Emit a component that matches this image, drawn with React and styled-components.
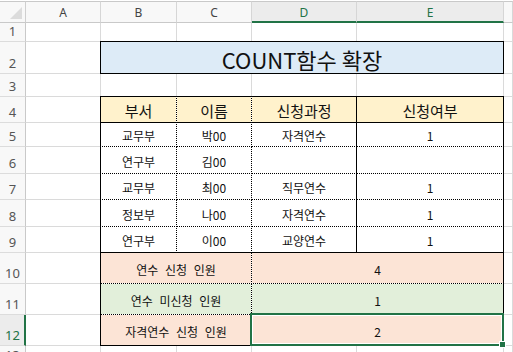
import React from 'react';
import styled, { createGlobalStyle } from 'styled-components';

const GlobalStyle = createGlobalStyle`
  html, body { margin: 0; padding: 0; background: #fff; overflow: hidden; }
  body { font-family: "Noto Sans CJK KR", "Noto Sans", sans-serif; }
`;

const GREEN = '#217346';

// line styles for table borders: s = solid, d = dotted, anything else = none
const line = v =>
  v === 's' ? '1px solid #000' : v === 'd' ? '1px dotted #000' : '1px solid transparent';

const Sheet = styled.div`
  display: grid;
  grid-template-columns: 26px 75px 76px 75px 105px 147px 1fr;
  grid-template-rows: 22px 19px 32px 23px 26px 24px 27px 26px 27px 26px 31px 31px 31px 20px;
  width: 100vw;
  padding-top: 1px;
`;

const Corner = styled.div`
  background: #f8f8f8;
  border-top: 1px solid #c9c9c9;
  border-right: 1px solid #cfcfcf;
  border-bottom: 1px solid #c9c9c9;
  display: flex;
  justify-content: flex-end;
  align-items: flex-end;
  padding: 0 3px 3px 0;
`;

const Triangle = styled.div`
  width: 12px;
  height: 12px;
  background: #dcdcdc;
  clip-path: polygon(100% 0, 100% 100%, 0 100%);
`;

const ColHead = styled.div`
  background: ${p => (p.$sel ? '#ececec' : '#f8f8f8')};
  border-top: 1px solid #c9c9c9;
  border-right: 1px solid #d6d6d6;
  border-bottom: ${p => (p.$sel ? `2px solid ${GREEN}` : '1px solid #c9c9c9')};
  color: ${p => (p.$sel ? GREEN : '#444')};
  font-family: "Noto Sans", "Open Sans", sans-serif;
  font-size: 12px;
  display: flex;
  align-items: center;
  justify-content: center;
  padding-top: ${p => (p.$sel ? '1px' : '0')};
`;

const RowHead = styled.div`
  background: ${p => (p.$sel ? '#ececec' : '#f8f8f8')};
  border-right: ${p => (p.$sel ? `2px solid ${GREEN}` : '1px solid #c9c9c9')};
  border-bottom: 1px solid #dcdcdc;
  color: ${p => (p.$sel ? GREEN : '#555')};
  font-family: "Noto Sans", "Open Sans", sans-serif;
  font-size: 13px;
  line-height: 1;
  display: flex;
  align-items: flex-end;
  justify-content: center;
  padding-bottom: 3px;
  padding-left: ${p => (p.$sel ? '1px' : '0')};
  box-sizing: border-box;
`;

const Cell = styled.div`
  border-right: 1px solid #dadada;
  border-bottom: 1px solid #dadada;
`;

const TCell = styled.div`
  grid-column: span ${p => p.$span || 1};
  margin: -1px 0 0 -1px;
  border-top: ${p => line(p.$t)};
  border-right: ${p => line(p.$r)};
  border-bottom: ${p => line(p.$b)};
  border-left: ${p => line(p.$l)};
  background: ${p => p.$bg || '#fff'};
  background-clip: padding-box;
  display: flex;
  align-items: center;
  justify-content: center;
  font-size: ${p => p.$size || 12}px;
  word-spacing: ${p => (p.$wide ? '4px' : '0')};
  color: #111;
  white-space: nowrap;
  position: relative;
  padding-top: 2px;
`;

const Selection = styled.div`
  position: absolute;
  top: -2px;
  left: -2px;
  right: -1px;
  bottom: -1px;
  border: 2px solid ${GREEN};
  box-shadow: inset 0 0 0 1px #fff;
  z-index: 2;
  pointer-events: none;
`;

const FillHandle = styled.div`
  position: absolute;
  right: -4px;
  bottom: -4px;
  width: 5px;
  height: 5px;
  background: ${GREEN};
  border: 1px solid #fff;
`;

const PEACH = '#fce4d6';
const MINT = '#e2efda';

const people = [
  ['교무부', '박00', '자격연수', '1'],
  ['연구부', '김00', '', ''],
  ['교무부', '최00', '직무연수', '1'],
  ['정보부', '나00', '자격연수', '1'],
  ['연구부', '이00', '교양연수', '1'],
];

const totals = [
  { label: '연수 신청 인원', value: '4', bg: PEACH },
  { label: '연수 미신청 인원', value: '1', bg: MINT },
  { label: '자격연수 신청 인원', value: '2', bg: PEACH, sel: true },
];

function Blank({ n }) {
  return Array.from({ length: n }, (_, i) => <Cell key={i} />);
}

export default function App() {
  return (
    <>
      <GlobalStyle />
      <Sheet>
        <Corner><Triangle /></Corner>
        {['A', 'B', 'C', 'D', 'E'].map(c => (
          <ColHead key={c} $sel={c === 'D' || c === 'E'}>{c}</ColHead>
        ))}
        {/* column F is cut by the window edge, its letter falls outside */}
        <ColHead />

        <RowHead>1</RowHead>
        <Blank n={6} />

        <RowHead>2</RowHead>
        <Cell />
        <TCell $span={4} $t="s" $r="s" $b="s" $l="s" $bg="#ddebf7" $size={22}>
          COUNT함수 확장
        </TCell>
        <Cell />

        <RowHead>3</RowHead>
        <Blank n={6} />

        <RowHead>4</RowHead>
        <Cell />
        <TCell $t="s" $l="s" $r="d" $b="s" $bg="#fff2cc" $size={15}>부서</TCell>
        <TCell $t="s" $r="d" $b="s" $bg="#fff2cc" $size={15}>이름</TCell>
        <TCell $t="s" $r="s" $b="s" $bg="#fff2cc" $size={15}>신청과정</TCell>
        <TCell $t="s" $r="s" $b="s" $bg="#fff2cc" $size={15}>신청여부</TCell>
        <Cell />

        {people.map((row, i) => {
          const last = i === people.length - 1;
          const b = last ? 's' : 'd';
          return (
            <React.Fragment key={i}>
              <RowHead>{i + 5}</RowHead>
              <Cell />
              <TCell $l="s" $r="d" $b={b}>{row[0]}</TCell>
              <TCell $r="d" $b={b}>{row[1]}</TCell>
              <TCell $r="s" $b={b}>{row[2]}</TCell>
              <TCell $r="s" $b={b}>{row[3]}</TCell>
              <Cell />
            </React.Fragment>
          );
        })}

        {totals.map((t, i) => {
          const b = i === totals.length - 1 ? 's' : 'd';
          return (
            <React.Fragment key={t.label}>
              <RowHead $sel={t.sel}>{i + 10}</RowHead>
              <Cell />
              <TCell $span={2} $l="s" $r="d" $b={b} $bg={t.bg} $wide>{t.label}</TCell>
              <TCell $span={2} $r="s" $b={b} $bg={t.bg}>
                {t.value}
                {t.sel && (
                  <Selection>
                    <FillHandle />
                  </Selection>
                )}
              </TCell>
              <Cell />
            </React.Fragment>
          );
        })}

        <RowHead>13</RowHead>
        <Blank n={6} />
      </Sheet>
    </>
  );
}
